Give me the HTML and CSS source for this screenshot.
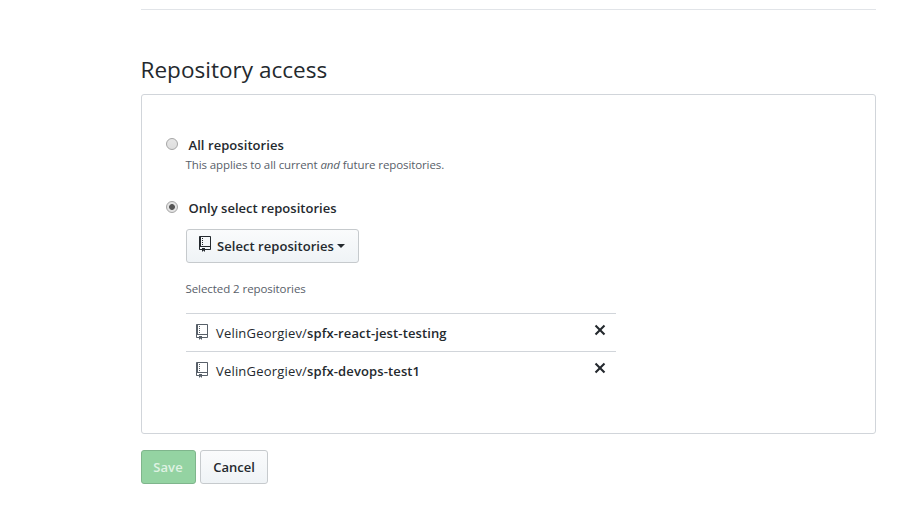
FILE: index.html
```html
<!DOCTYPE html>
<html lang="en">
<head>
<meta charset="utf-8">
<title>Repository access</title>
<link rel="stylesheet" href="styles.css">
</head>
<body>
<svg class="sprite" aria-hidden="true">
  <symbol id="repo" viewBox="0 0 12 16"><path d="M4 9H3V8h1v1zm0-3H3v1h1V6zm0-2H3v1h1V4zm0-2H3v1h1V2zm8-1v12c0 .55-.45 1-1 1H6v2l-1.5-1.5L3 16v-2H1c-.55 0-1-.45-1-1V1c0-.55.45-1 1-1h10c.55 0 1 .45 1 1zm-1 10H1v2h2v-1h3v1h5v-2zm0-10H2v9h9V1z"/></symbol>
  <symbol id="x" viewBox="0 0 12 16"><path d="M7.48 8l3.75 3.75-1.48 1.48L6 9.48l-3.75 3.75-1.48-1.48L4.52 8 .77 4.25l1.48-1.48L6 6.52l3.75-3.75 1.48 1.48L7.48 8z"/></symbol>
</svg>
<main class="page">
  <hr class="divider">
  <h2 class="title"><span>Repository access</span></h2>
  <form class="box">
    <label class="option"><span class="radio"></span><b class="all">All repositories</b></label>
    <p class="note"><span>This applies to all current <em>and</em> future repositories.</span></p>
    <label class="option second"><span class="radio checked"></span><b class="only">Only select repositories</b></label>
    <button type="button" class="btn select"><svg class="icon"><use href="#repo"/></svg><span>Select repositories</span><i class="caret"></i></button>
    <p class="count"><span>Selected 2 repositories</span></p>
    <ul class="repos">
      <li class="repo"><svg class="icon"><use href="#repo"/></svg><span class="name">VelinGeorgiev/</span><b class="slug">spfx-react-jest-testing</b><svg class="remove"><use href="#x"/></svg></li>
      <li class="repo"><svg class="icon"><use href="#repo"/></svg><span class="name">VelinGeorgiev/</span><b class="slug">spfx-devops-test1</b><svg class="remove"><use href="#x"/></svg></li>
    </ul>
  </form>
  <div class="actions">
    <button type="button" class="btn save">Save</button>
    <button type="button" class="btn cancel">Cancel</button>
  </div>
</main>
</body>
</html>
```
FILE: styles.css
```css
* { box-sizing: border-box; }
body { margin: 0; background: #fff; color: #24292e; font: 13px/20px "Open Sans", "Noto Sans", sans-serif; }
.sprite { display: none; }
.page { width: 735px; margin-left: 141px; padding-top: 9px; }
.divider { height: 1px; margin: 0; border: 0; background: #e1e4e8; }
.title { margin: 42px 0 0; height: 42px; font-size: 22.5px; line-height: 36px; font-weight: 400; letter-spacing: .03px; text-indent: -.5px; white-space: nowrap; }
.box { height: 340px; border: 1px solid #d1d5da; border-radius: 3px; padding: 40px 24px 0; }
.option { display: flex; align-items: center; height: 20px; }
b { font-weight: 600; }
.radio { width: 12px; height: 12px; margin: -2px 10.5px 0 0; border: 1px solid #a5a5a5; border-radius: 50%; background: linear-gradient(#e6e6e6, #dedede); }
.all { letter-spacing: .06px; }
.only { letter-spacing: .02px; }
.checked { background: radial-gradient(circle at center, #555 0 2.5px, #e3e3e3 3.3px); }
.note, .count { margin: 0 0 0 19.5px; font-size: 11.5px; line-height: 20px; color: #586069; white-space: nowrap; }
.note { letter-spacing: -.1px; }
.second { margin-top: 23px; }
.btn { display: flex; align-items: center; justify-content: center; height: 34px; padding: 0; border: 1px solid #c6cacd; border-radius: 3px; background: linear-gradient(#fafbfc, #eff3f6); color: #24292e; font: 600 13px/20px "Open Sans", "Noto Sans", sans-serif; white-space: nowrap; }
.select { width: 173px; margin: 11px 0 0 20px; justify-content: flex-start; padding-left: 12px; letter-spacing: .05px; }
.icon { width: 12px; height: 16px; flex: none; fill: currentColor; }
.select .icon { margin: -4px 6px 0 0; }
.caret { margin-left: 3px; border: 4px solid transparent; border-top-color: currentColor; border-bottom: 0; }
.count { margin-top: 16px; letter-spacing: -.07px; }
.repos { list-style: none; width: 430px; margin: 14px 0 0 20px; padding: 0; }
.repo { display: flex; align-items: center; height: 38px; border-top: 1px solid #d1d5da; padding: 1px 10px 0; white-space: nowrap; }
.repo .icon { margin: -2px 8px 0 0; fill: #586069; }
.name { letter-spacing: .19px; }
.slug { letter-spacing: .12px; }
.remove { width: 12px; height: 16px; margin: -6px 0 0 auto; fill: #24292e; }
.actions { display: flex; gap: 4px; margin-top: 16px; }
.save { width: 55px; padding-right: 1px; border-color: #7fb58c; background: #94d3a2; color: #dff2e3; letter-spacing: .1px; }
.cancel { width: 68px; }
```
